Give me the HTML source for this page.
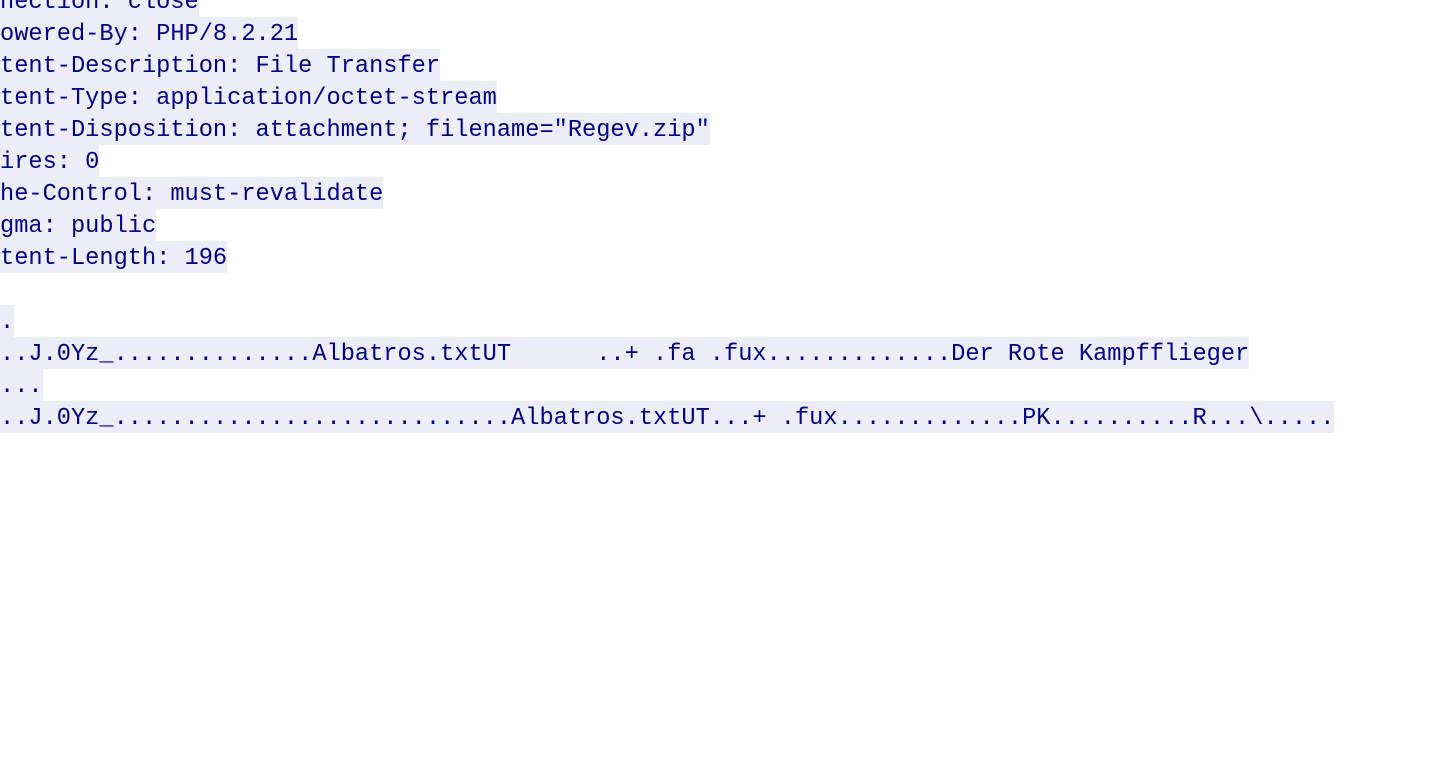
<!DOCTYPE html>
<html><head><meta charset="utf-8"><style>
html,body{margin:0;padding:0;background:#fff;width:1440px;height:770px;overflow:hidden}
.w{position:absolute;left:0;top:-15px;font-family:"Liberation Mono",monospace;font-size:23.67px;line-height:32px;color:#000080}
.l{height:32px;white-space:nowrap}
.l span{background:#ededf8;display:inline-block;height:30px;padding-top:2px;line-height:32px;white-space:pre;vertical-align:top}
.h{margin-left:-42.6px}
</style></head><body>
<div class="w"><div class="l h"><span>Connection: close</span></div><div class="l h"><span>X-Powered-By: PHP/8.2.21</span></div><div class="l h"><span>Content-Description: File Transfer</span></div><div class="l h"><span>Content-Type: application/octet-stream</span></div><div class="l h"><span>Content-Disposition: attachment; filename="Regev.zip"</span></div><div class="l h"><span>Expires: 0</span></div><div class="l h"><span>Cache-Control: must-revalidate</span></div><div class="l h"><span>Pragma: public</span></div><div class="l h"><span>Content-Length: 196</span></div><div class="l"></div><div class="l"><span>.</span></div><div class="l"><span>..J.0Yz_..............Albatros.txtUT      ..+ .fa .fux.............Der Rote Kampfflieger</span></div><div class="l"><span>...</span></div><div class="l"><span>..J.0Yz_............................Albatros.txtUT...+ .fux.............PK..........R...\.....</span></div></div>
</body></html>
